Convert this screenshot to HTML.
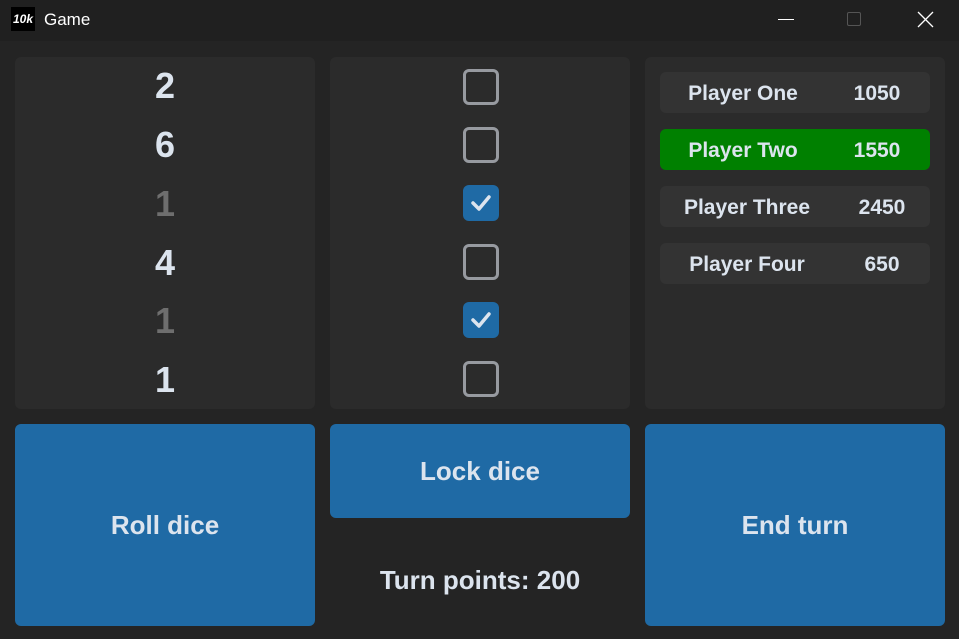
<!DOCTYPE html>
<html><head><meta charset="utf-8"><style>
*{margin:0;padding:0;box-sizing:border-box}
body{width:959px;height:639px;background:#242424;font-family:"Liberation Sans",sans-serif;position:relative;overflow:hidden;color:#dce4ee}
.tb{position:absolute;left:0;top:0;width:959px;height:41px;background:#202020}
.abs{position:absolute}
.panel{position:absolute;background:#2b2b2b;border-radius:6px}
.die{position:absolute;left:15px;width:300px;text-align:center;font-weight:bold;font-size:36px;line-height:40px}
.cb{position:absolute;left:463px;width:36px;height:36px;border:3px solid #979aa0;border-radius:6px}
.cb.on{background:#1f6aa5;border:none}
.row{position:absolute;left:660px;width:270px;height:41px;background:#333333;border-radius:6px;font-weight:bold;font-size:21px;line-height:43px}
.row span{position:absolute;transform:translateX(-50%);white-space:nowrap}
.btn{position:absolute;background:#1f6aa5;border-radius:6px;font-weight:bold;font-size:26px;display:flex;align-items:center;justify-content:center}
</style></head><body>
<div class="tb"></div>
<div class="abs" style="left:11px;top:7px;width:24px;height:24px;background:#000;color:#fff;font-size:12px;font-weight:bold;font-style:italic;line-height:24px;text-align:center">10k</div>
<div class="abs" style="left:44px;top:10px;font-size:17px;color:#fff">Game</div>
<div class="abs" style="left:778px;top:19px;width:16px;height:1px;background:#fff"></div>
<div class="abs" style="left:847px;top:12px;width:14px;height:14px;border:1px solid #555;border-radius:2px"></div>
<svg class="abs" style="left:917px;top:11px" width="17" height="17"><path d="M1 1L16 16M16 1L1 16" stroke="#fff" stroke-width="1.3"/></svg>

<div class="panel" style="left:15px;top:57px;width:300px;height:352px"></div>
<div class="panel" style="left:330px;top:57px;width:300px;height:352px"></div>
<div class="panel" style="left:645px;top:57px;width:300px;height:352px"></div>

<div class="die" style="top:66px">2</div>
<div class="die" style="top:125px">6</div>
<div class="die" style="top:184px;color:#6e6e6e">1</div>
<div class="die" style="top:243px">4</div>
<div class="die" style="top:301px;color:#6e6e6e">1</div>
<div class="die" style="top:360px">1</div>

<div class="cb" style="top:69px"></div>
<div class="cb" style="top:127px"></div>
<div class="cb on" style="top:185px"><svg width="36" height="36"><path d="M10 18L16 24L26 12" stroke="#dce4ee" stroke-width="3.5" fill="none" stroke-linecap="round" stroke-linejoin="round"/></svg></div>
<div class="cb" style="top:244px"></div>
<div class="cb on" style="top:302px"><svg width="36" height="36"><path d="M10 18L16 24L26 12" stroke="#dce4ee" stroke-width="3.5" fill="none" stroke-linecap="round" stroke-linejoin="round"/></svg></div>
<div class="cb" style="top:361px"></div>

<div class="row" style="top:72px"><span style="left:83px">Player One</span><span style="left:217px">1050</span></div>
<div class="row" style="top:129px;background:#008000"><span style="left:83px">Player Two</span><span style="left:217px">1550</span></div>
<div class="row" style="top:186px"><span style="left:87px">Player Three</span><span style="left:222px">2450</span></div>
<div class="row" style="top:243px"><span style="left:87px">Player Four</span><span style="left:222px">650</span></div>

<div class="btn" style="left:15px;top:424px;width:300px;height:202px">Roll dice</div>
<div class="btn" style="left:330px;top:424px;width:300px;height:94px">Lock dice</div>
<div class="btn" style="left:645px;top:424px;width:300px;height:202px">End turn</div>
<div class="abs" style="left:330px;top:565px;width:300px;text-align:center;font-weight:bold;font-size:26px">Turn points: 200</div>
</body></html>
